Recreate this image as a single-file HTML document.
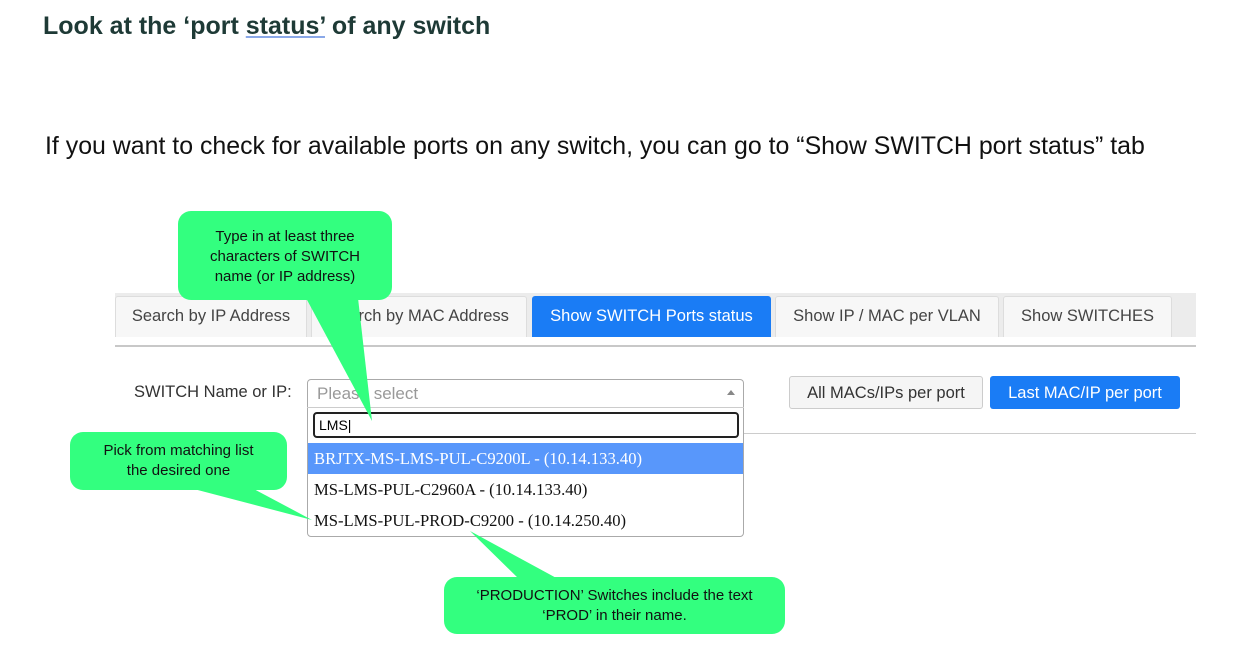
<!DOCTYPE html>
<html><head><style>
body{margin:0;width:1259px;height:645px;background:#fff;position:relative;overflow:hidden;font-family:"Liberation Sans",Arial,sans-serif}
.a{position:absolute}
.tab{position:absolute;top:296px;height:41px;background:#f7f7f7;border:1px solid #ddd;border-bottom:none;border-radius:3px 3px 0 0;font-size:16.5px;color:#444;line-height:38px;text-align:center;box-sizing:border-box;white-space:nowrap}
.co{position:absolute;background:#33ff7f;border-radius:13px;font-size:15px;color:#111;text-align:center;line-height:20px}
.it{position:absolute;left:308px;width:435px;height:31px;font-family:"Liberation Serif",serif;font-size:16.6px;line-height:31px;padding-left:6px;box-sizing:border-box;color:#111;white-space:nowrap}
</style></head><body>
<div class="a" style="left:43px;top:12px;font-size:25px;font-weight:bold;color:#1e3a36;white-space:nowrap">Look at the ‘port <span style="text-decoration:underline;text-decoration-color:#8aa8e8">status’</span> of any switch</div>
<div class="a" style="left:45px;top:132px;font-size:24.9px;color:#111;white-space:nowrap">If you want to check for available ports on any switch, you can go to “Show SWITCH port status” tab</div>

<div class="a" style="left:115px;top:293px;width:1081px;height:44px;background:#ececec"></div>
<div class="tab" style="left:115px;width:192px">Search by IP Address</div>
<div class="tab" style="left:311px;width:216px">Search by MAC Address</div>
<div class="tab" style="left:532px;width:239px;background:#1a7cf5;border-color:#1a7cf5;color:#fff">Show SWITCH Ports status</div>
<div class="tab" style="left:775px;width:224px">Show IP / MAC per VLAN</div>
<div class="tab" style="left:1003px;width:169px">Show SWITCHES</div>
<div class="a" style="left:115px;top:345px;width:1081px;height:2px;background:#c8c8c8"></div>
<div class="a" style="left:743px;top:433px;width:453px;height:1px;background:#ccc"></div>

<div class="a" style="left:134px;top:383px;font-size:16.5px;color:#333">SWITCH Name or IP:</div>
<div class="a" style="left:307px;top:379px;width:437px;height:158px;border:1px solid #aaa;border-radius:4px;box-sizing:border-box;background:#fff"></div>
<div class="a" style="left:307px;top:407px;width:437px;height:1px;background:#ccc"></div>
<div class="a" style="left:317px;top:384px;font-size:17px;color:#999">Please select</div>
<div class="a" style="left:727px;top:390px;width:0;height:0;border-left:4px solid transparent;border-right:4px solid transparent;border-bottom:5px solid #888"></div>
<div class="a" style="left:313px;top:412px;width:426px;height:26px;border:2px solid #222;border-radius:4px;box-sizing:border-box;font-size:14px;line-height:22px;padding-left:4px">LMS|</div>
<div class="it" style="top:443px;background:#5897fb;color:#fff">BRJTX-MS-LMS-PUL-C9200L - (10.14.133.40)</div>
<div class="it" style="top:474px">MS-LMS-PUL-C2960A - (10.14.133.40)</div>
<div class="it" style="top:505px">MS-LMS-PUL-PROD-C9200 - (10.14.250.40)</div>

<div class="a" style="left:789px;top:376px;width:194px;height:33px;border:1px solid #ccc;border-radius:3px;background:#f5f5f5;box-sizing:border-box;font-size:16.5px;color:#333;line-height:32px;text-align:center">All MACs/IPs per port</div>
<div class="a" style="left:990px;top:376px;width:190px;height:33px;border-radius:3px;background:#1a7cf5;box-sizing:border-box;font-size:16.5px;color:#fff;line-height:34px;text-align:center">Last MAC/IP per port</div>

<svg class="a" style="left:0;top:0" width="1259" height="645">
<polygon points="306,298 358,298 372,421" fill="#33ff7f"/>
<polygon points="190,488 252,488 312,520" fill="#33ff7f"/>
<polygon points="520,580 560,580 470,531" fill="#33ff7f"/>
</svg>
<div class="co" style="left:178px;top:211px;width:214px;height:89px;padding-top:16px;box-sizing:border-box">Type in at least three<br>characters of SWITCH<br>name (or IP address)</div>
<div class="co" style="left:70px;top:432px;width:217px;height:58px;padding-top:9px;box-sizing:border-box">Pick from matching list<br>the desired one</div>
<div class="co" style="left:444px;top:577px;width:341px;height:57px;padding-top:9px;box-sizing:border-box">‘PRODUCTION’ Switches include the text<br>‘PROD’ in their name.</div>
</body></html>
